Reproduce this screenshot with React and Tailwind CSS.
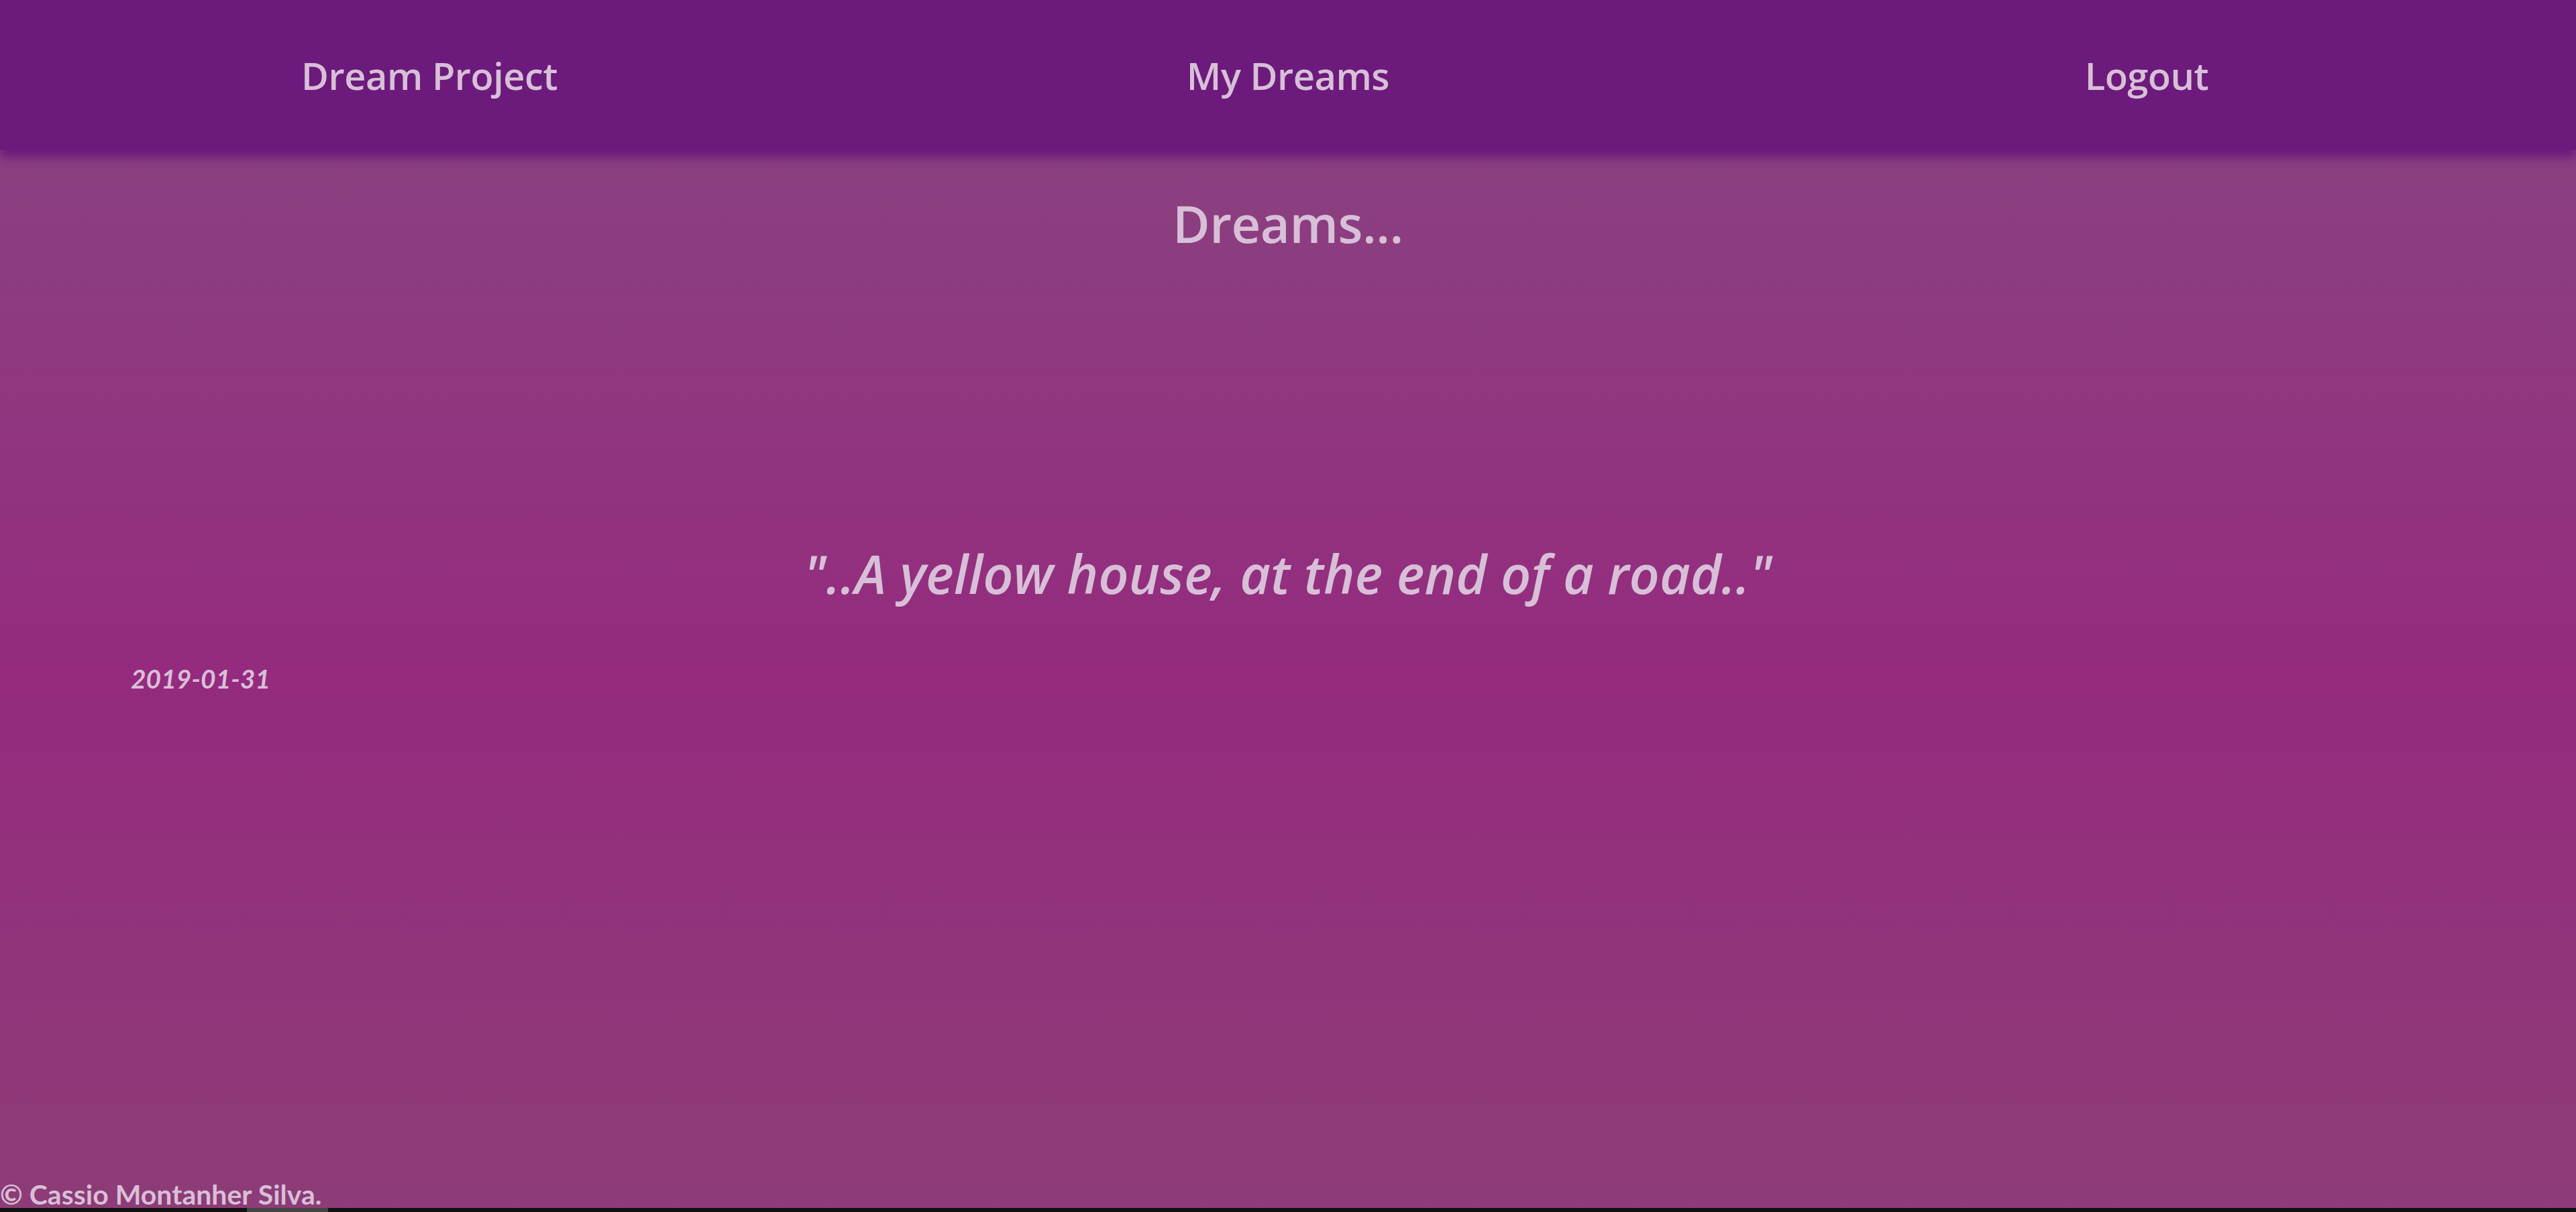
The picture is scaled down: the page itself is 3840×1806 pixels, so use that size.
const navLinks = ['Dream Project', 'My Dreams', 'Logout']

const App = () => {
  return (
    <div className="h-[1806px] flex flex-col font-['Open_Sans',sans-serif] text-[#d8bfd8]">
      {/* Top nav */}
      <header className="relative z-10 h-[223px] shrink-0 grid grid-cols-3 items-center bg-[#6c1a7b] shadow-[0_12px_14px_#6c1a7b]">
        {navLinks.map((label) => (
          <a key={label} href="#" className="text-center text-[56px] font-semibold leading-normal tracking-[-0.5px]">
            {label}
          </a>
        ))}
      </header>

      {/* Dreams list */}
      <main className="flex-1 flex flex-col bg-gradient-to-b from-[#8a4080] via-[#952a7e] to-[#8d3c77]">
        <h1 className="mt-[72px] text-center text-[76px] font-semibold leading-none tracking-[-0.5px]">Dreams...</h1>

        <div className="mt-[444px]">
          <p className="text-center text-[79px] font-semibold italic leading-none">
            "..A yellow house, at the end of a road.."
          </p>
          <p className="mt-[98px] pl-[195px] font-['Lato',sans-serif] text-[39px] font-bold italic leading-none">
            2019-01-31
          </p>
        </div>

        <footer className="mt-auto font-['Lato',sans-serif] text-[41px] font-bold leading-none">© Cassio Montanher Silva.</footer>
      </main>

      {/* bottom scrollbar strip */}
      <div className="h-[6px] shrink-0 flex bg-[#111111]">
        <div className="ml-[368px] w-[121px] bg-[#444444]" />
      </div>
    </div>
  )
}

export default App
